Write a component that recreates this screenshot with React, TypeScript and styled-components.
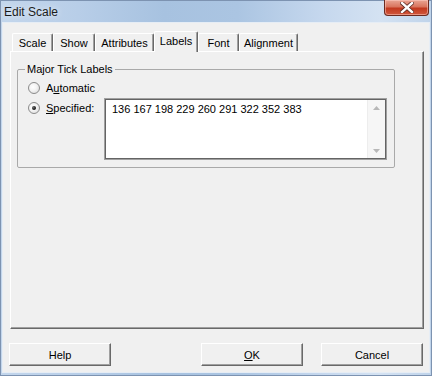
import React from 'react';
import styled, { createGlobalStyle } from 'styled-components';

const GlobalStyle = createGlobalStyle`
  html, body {
    margin: 0;
    padding: 0;
    background: #ffffff;
  }
  body {
    font-family: "Liberation Sans", Arial, sans-serif;
    font-size: 11px;
    color: #000;
  }
`;

const Window = styled.div`
  width: 432px;
  height: 376px;
  box-sizing: border-box;
  display: flex;
  flex-direction: column;
  padding: 0 2px 3px 2px;
  background:
    linear-gradient(to right, #c3d6ec 0%, #b8cee8 18%, #a7c2e0 38%, #abc5e2 55%, #c6d8ee 75%, #d4e2f2 88%, #bfd3ea 100%);
  box-shadow: inset 0 0 0 1px #7d93b1;
`;

const TitleBar = styled.div`
  height: 22px;
  display: flex;
  align-items: flex-start;
  justify-content: space-between;
`;

const Title = styled.span`
  font-size: 12px;
  line-height: 12px;
  margin: 6px 0 0 2px;
  color: #1b1b1b;
  text-shadow: 0 0 6px rgba(255, 255, 255, 0.9);
`;

const CloseButton = styled.div`
  width: 45px;
  height: 16px;
  margin-right: 1px;
  box-sizing: border-box;
  display: flex;
  align-items: center;
  justify-content: center;
  border: 1px solid #6b2a20;
  border-top: none;
  border-radius: 0 0 4px 4px;
  background: linear-gradient(to bottom, #e9a594 0%, #d9755e 45%, #c2391f 55%, #d0573c 100%);
  box-shadow: inset 0 0 0 1px rgba(255, 210, 200, 0.5);
`;

const Client = styled.div`
  flex: 1;
  display: flex;
  flex-direction: column;
  background: #f0f0f0;
  border: 1px solid #e6edf5;
  padding: 8px 5px 0 7px;
`;

const TabStrip = styled.div`
  height: 20px;
  display: flex;
  align-items: flex-end;
  padding-left: 2px;
`;

const Tab = styled.div<{ $w: number; $active?: boolean }>`
  width: ${(p) => p.$w}px;
  height: ${(p) => (p.$active ? 21 : 18)}px;
  margin-bottom: ${(p) => (p.$active ? -1 : 0)}px;
  position: relative;
  z-index: ${(p) => (p.$active ? 1 : 0)};
  box-sizing: border-box;
  display: flex;
  align-items: ${(p) => (p.$active ? 'flex-start' : 'center')};
  padding-top: ${(p) => (p.$active ? 3 : 0)}px;
  justify-content: center;
  background: #f0f0f0;
  border-top: 1px solid #ffffff;
  border-left: 1px solid #ffffff;
  border-right: 1px solid #696969;
  box-shadow: inset -1px 0 0 #a0a0a0;
  border-radius: 2px 2px 0 0;
  font-size: 11px;
`;

const Panel = styled.div`
  height: 278px;
  box-sizing: border-box;
  border-top: 1px solid #ffffff;
  border-left: 1px solid #ffffff;
  border-right: 1px solid #696969;
  border-bottom: 1px solid #696969;
  box-shadow: inset -1px -1px 0 #a0a0a0;
  padding: 0;
  margin-right: 0;
`;

const GroupBox = styled.fieldset`
  width: 378px;
  box-sizing: border-box;
  margin: 11px 0 0 6px;
  padding: 2px 7px 7px 10px;
  border: 1px solid #a9a9a9;
  border-radius: 2px;
`;

const GroupLegend = styled.legend`
  padding: 0 2px;
  margin-left: -3px;
  line-height: 13px;
  font-size: 11px;
`;

const GroupGrid = styled.div`
  display: grid;
  grid-template-columns: 76px 283px;
  grid-template-rows: 20px auto;
`;

const RadioItem = styled.label<{ $span?: boolean }>`
  height: 20px;
  display: flex;
  align-items: center;
  gap: 6px;
  grid-column: ${(p) => (p.$span ? '1 / 3' : 'auto')};
  align-self: start;
`;

const RadioCircle = styled.span<{ $checked?: boolean }>`
  width: 12px;
  height: 12px;
  box-sizing: border-box;
  border-radius: 50%;
  border: 1px solid #8b8b8b;
  background: radial-gradient(circle at 40% 40%, #ffffff 0%, #f4f4f4 40%, #d6d6d6 100%);
  display: flex;
  align-items: center;
  justify-content: center;

  &::after {
    content: '';
    display: ${(p) => (p.$checked ? 'block' : 'none')};
    width: 4px;
    height: 4px;
    border-radius: 50%;
    background: radial-gradient(circle at 35% 35%, #6a6a6a 0%, #111 70%);
  }
`;

const Accel = styled.span`
  text-decoration: underline;
  text-underline-offset: 1px;
`;

const TextBox = styled.div`
  height: 62px;
  box-sizing: border-box;
  display: flex;
  background: #ffffff;
  border: 1px solid #a0a0a0;
  box-shadow: inset 0 0 0 1px #646464;
  padding: 1px;
`;

const TextContent = styled.div`
  flex: 1;
  padding: 3px 0 0 6px;
  font-size: 11px;
  line-height: 13px;
`;

const ScrollBar = styled.div`
  width: 17px;
  display: flex;
  flex-direction: column;
  justify-content: space-between;
  align-items: center;
  background: #f6f6f6;
  border-left: 1px solid #ededed;
  padding: 6px 0 5px;
`;

const ButtonRow = styled.div`
  display: flex;
  align-items: center;
  margin: 14px 1px 0 -1px;
`;

const Spacer = styled.div`
  flex: 1;
`;

const Button = styled.div<{ $gap?: number }>`
  width: 102px;
  height: 23px;
  box-sizing: border-box;
  margin-left: ${(p) => p.$gap ?? 0}px;
  display: flex;
  align-items: center;
  justify-content: center;
  background: #f0f0f0;
  border-top: 1px solid #ffffff;
  border-left: 1px solid #ffffff;
  border-right: 1px solid #696969;
  border-bottom: 1px solid #696969;
  box-shadow: inset -1px -1px 0 #a0a0a0;
  font-size: 11px;
`;

const tabs = [
  { label: 'Scale', w: 41 },
  { label: 'Show', w: 42 },
  { label: 'Attributes', w: 59 },
  { label: 'Labels', w: 44, active: true },
  { label: 'Font', w: 41 },
  { label: 'Alignment', w: 59 },
];

const Arrow = ({ up }: { up?: boolean }) => (
  <svg width="7" height="4" viewBox="0 0 7 4">
    <polygon points={up ? '0,4 3.5,0 7,4' : '0,0 3.5,4 7,0'} fill="#b8b8b8" />
  </svg>
);

const CloseGlyph = () => (
  <svg width="14" height="11" viewBox="0 0 14 11">
    <path
      d="M2 1 L12 10 M12 1 L2 10"
      stroke="#5a2a22"
      strokeWidth="4"
      strokeLinecap="square"
    />
    <path
      d="M2 1 L12 10 M12 1 L2 10"
      stroke="#ffffff"
      strokeWidth="2.4"
      strokeLinecap="square"
    />
  </svg>
);

export default function App() {
  return (
    <>
      <GlobalStyle />
      <Window>
        <TitleBar>
          <Title>Edit Scale</Title>
          <CloseButton>
            <CloseGlyph />
          </CloseButton>
        </TitleBar>
        <Client>
          <TabStrip>
            {tabs.map((t) => (
              <Tab key={t.label} $w={t.w} $active={t.active}>
                {t.label}
              </Tab>
            ))}
          </TabStrip>
          <Panel>
            <GroupBox>
              <GroupLegend>Major Tick Labels</GroupLegend>
              <GroupGrid>
                <RadioItem $span>
                  <RadioCircle />
                  <span>
                    A<Accel>u</Accel>tomatic
                  </span>
                </RadioItem>
                <RadioItem>
                  <RadioCircle $checked />
                  <span>
                    <Accel>S</Accel>pecified:
                  </span>
                </RadioItem>
                <TextBox>
                  <TextContent>136 167 198 229 260 291 322 352 383</TextContent>
                  <ScrollBar>
                    <Arrow up />
                    <Arrow />
                  </ScrollBar>
                </TextBox>
              </GroupGrid>
            </GroupBox>
          </Panel>
          <ButtonRow>
            <Button>Help</Button>
            <Spacer />
            <Button>
              <span>
                <Accel>O</Accel>K
              </span>
            </Button>
            <Button $gap={18}>Cancel</Button>
          </ButtonRow>
        </Client>
      </Window>
    </>
  );
}
